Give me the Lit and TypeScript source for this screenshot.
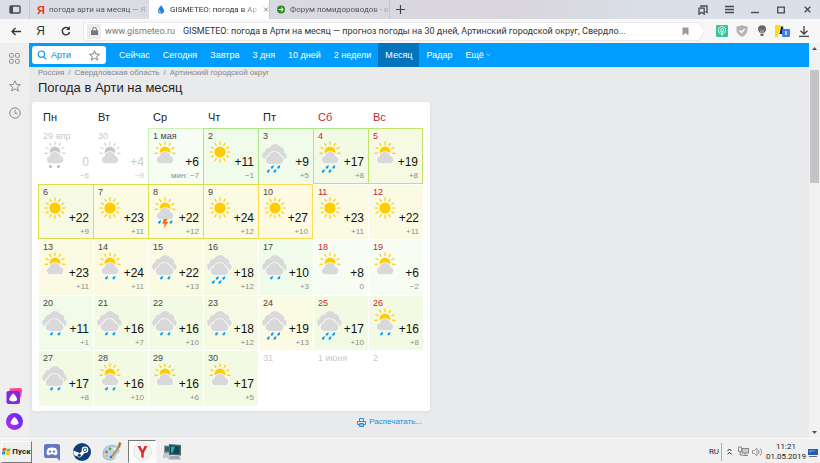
import { LitElement, html, svg, css, nothing } from "lit";
import { customElement, property } from "lit/decorators.js";
import { classMap } from "lit/directives/class-map.js";

type Sky = "sun" | "part" | "cloud";
type Fall = "" | "drizzle" | "rain" | "storm" | "snow";

interface Day {
  label: string;
  tone: string;
  sky?: Sky;
  fall?: Fall;
  max?: string;
  min?: string;
  edge?: string;
}

const d = (
  label: string, tone: string, sky?: Sky, fall: Fall = "",
  max = "", min = "", edge = "",
): Day => ({ label, tone, sky, fall, max, min, edge });

const WEEKS: Day[][] = [
  [
    d("29 апр", "past", "part", "snow", "0", "−6"),
    d("30", "past", "part", "", "+4", "−9"),
    d("1 мая", "t1", "part", "", "+6", "мин: −7", "pale"),
    d("2", "t2", "sun", "", "+11", "−1", "green"),
    d("3", "t2", "cloud", "rain", "+9", "+5", "green"),
    d("4", "t3", "part", "rain", "+17", "+8", "green foot"),
    d("5", "t4", "part", "", "+19", "+8", "lime foot end"),
  ],
  [
    d("6", "t4", "sun", "", "+22", "+9", "olive foot"),
    d("7", "t5", "sun", "", "+23", "+11", "olive foot"),
    d("8", "t5", "part", "storm", "+22", "+12", "olive foot"),
    d("9", "t5", "sun", "", "+24", "+12", "olive foot"),
    d("10", "t6", "sun", "", "+27", "+10", "gold foot end"),
    d("11", "t5", "sun", "", "+23", "+11"),
    d("12", "t5", "sun", "", "+22", "+11"),
  ],
  [
    d("13", "t5", "part", "", "+23", "+11"),
    d("14", "t5", "part", "drizzle", "+24", "+11"),
    d("15", "t5", "cloud", "drizzle", "+22", "+13"),
    d("16", "t4", "cloud", "rain", "+18", "+12"),
    d("17", "t2", "cloud", "drizzle", "+10", "+3"),
    d("18", "t1", "part", "", "+8", "0"),
    d("19", "t1", "part", "", "+6", "−2"),
  ],
  [
    d("20", "t2", "cloud", "drizzle", "+11", "+1"),
    d("21", "t3", "cloud", "drizzle", "+16", "+7"),
    d("22", "t3", "cloud", "drizzle", "+16", "+10"),
    d("23", "t4", "cloud", "drizzle", "+18", "+12"),
    d("24", "t5", "cloud", "rain", "+19", "+13"),
    d("25", "t3", "cloud", "rain", "+17", "+10"),
    d("26", "t3", "part", "drizzle", "+16", "+8"),
  ],
  [
    d("27", "t3", "cloud", "drizzle", "+17", "+8"),
    d("28", "t3", "part", "drizzle", "+16", "+10"),
    d("29", "t3", "part", "", "+16", "+6"),
    d("30", "t3", "part", "", "+17", "+5"),
    d("31", "past"),
    d("1 июня", "past"),
    d("2", "past"),
  ],
];

const DAY_NAMES = ["Пн", "Вт", "Ср", "Чт", "Пт", "Сб", "Вс"];
const NAV = ["Сейчас", "Сегодня", "Завтра", "3 дня", "10 дней", "2 недели", "Месяц", "Радар"];

@customElement("weather-icon")
export class WeatherIcon extends LitElement {
  @property() sky: Sky = "sun";
  @property() fall: Fall = "";
  @property({ type: Boolean }) muted = false;

  static styles = css`
    :host { display: block; }
    svg { display: block; width: 28px; height: 33px; }
    .sun { fill: #ffcc00; }
    .rays { stroke: #ffcc00; stroke-width: 1.2; stroke-linecap: round; }
    .cloud { fill: #d9d9dc; }
    .rim { stroke: #fbfcf0; stroke-width: 1.8; paint-order: stroke; }
    .drop { fill: #0a9bf5; }
    .flake { fill: #a9a9ad; }
    .bolt { fill: #ff6d00; }
    .muted .sun { fill: #c6c6c8; }
    .muted .rays { stroke: #d2d2d4; }
    .muted .cloud { fill: #dadadc; }
    .muted .rim { stroke: #fff; }
  `;

  private rays(angles: number[]) {
    return angles.map((a) => {
      const t = (a * Math.PI) / 180;
      const x = Math.sin(t);
      const y = -Math.cos(t);
      return svg`<line class="rays" x1=${14 + x * 7.6} y1=${11 + y * 7.6} x2=${14 + x * 10.1} y2=${11 + y * 10.1}></line>`;
    });
  }

  private drop(x: number, y: number) {
    return svg`<path class="drop" transform="translate(${x} ${y})" d="M1.9 -1.9 C2 0 1.7 1.7 .2 1.7 C-1.4 1.7 -1.2 0 -.2 -.7Z"></path>`;
  }

  private body() {
    if (this.sky === "sun") {
      return svg`<circle class="sun" cx="14" cy="11" r="5.6"></circle>
        ${this.rays([0, 30, 60, 90, 120, 150, 180, 210, 240, 270, 300, 330])}`;
    }
    if (this.sky === "part") {
      return svg`<circle class="sun" cx="14" cy="11" r="5.4"></circle>
        ${this.rays([-98, -64, -32, 0, 32, 64, 98])}
        <path class="cloud rim" d="M9 22.2 a3.4 3.4 0 0 1 -.5 -6.7 a5.6 5.6 0 0 1 10.8 -.6 a3.8 3.8 0 0 1 .3 7.3z"></path>`;
    }
    return svg`<path class="cloud" d="M4.2 18.5 a4 4 0 0 1 -.6 -7.6 a4.5 4.5 0 0 1 5 -4.1 a6 6 0 0 1 10.6 -.9 a4.7 4.7 0 0 1 4 5.500 a3.6 3.6 0 0 1 .2 6.8z"></path>
      <path class="cloud rim" d="M8.2 23 a4 4 0 0 1 -.6 -7.8 a6.200 6.200 0 0 1 11.6 -.3 a4.2 4.2 0 0 1 .2 8.1z"></path>`;
  }

  private precipitation() {
    switch (this.fall) {
      case "drizzle":
        return [this.drop(10, 25.7), this.drop(17.4, 25.7)];
      case "rain":
        return [this.drop(10.7, 26), this.drop(17.2, 26), this.drop(6.8, 30), this.drop(13.4, 30)];
      case "storm":
        return svg`${this.drop(8, 25)}${this.drop(19.5, 25)}
          <path class="bolt" d="M12.7 22h3.8l-1.5 3h2.3l-4.8 6.5 1.2-4.7h-2.3z"></path>`;
      case "snow":
        return svg`<circle class="flake" cx="9.5" cy="25.6" r="1.3"></circle><circle class="flake" cx="17.5" cy="25.6" r="1.3"></circle>`;
      default:
        return nothing;
    }
  }

  render() {
    return html`<svg viewBox="0 0 28 33" class=${classMap({ muted: this.muted })} aria-hidden="true">
      ${this.body()}${this.precipitation()}
    </svg>`;
  }
}

@customElement("month-calendar")
export class MonthCalendar extends LitElement {
  static styles = css`
    :host {
      display: block;
      background: #fff;
      border-radius: 3px;
      padding: 4px 7px 5px 6px;
      box-shadow: 0 1px 4px #0000000d;
    }
    table { width: 100%; table-layout: fixed; border-collapse: separate; border-spacing: 0; }
    th { height: 22px; padding: 0 0 0 5px; text-align: left; font-size: 11px; font-weight: 400; line-height: 22px; color: #222; }
    th:nth-child(n + 6), td:nth-child(n + 6) .date { color: #c2272d; }
    td { height: 55px; padding: 0; }
    tr:nth-child(odd) td, tr.first td { height: 56px; }
    td { box-sizing: border-box; vertical-align: top; border: 0 solid #fff; border-width: 1px 0 0 1px; }
    .day { display: grid; grid-template: 13px 32px / 1fr auto; padding: 1px 4px 0; }
    .date { grid-column: 1 / 3; font-size: 9px; line-height: 13px; color: #444; white-space: nowrap; }
    weather-icon { margin: -2px 0 0 -2px; width: 28px; }
    .temps { justify-self: end; width: 0; display: flex; flex-direction: column; align-items: flex-end; padding-top: 12px; white-space: nowrap; }
    .max { font-size: 12px; line-height: 15px; color: #111; }
    .min { font-size: 8px; line-height: 12px; color: #8d8d8d; }
    td.past .date, td.past .max, td.past .min { color: #c9c9c9; }
    .t1 { background: #f7fdf3; }
    .t2 { background: #f1fbea; }
    .t3 { background: #f2fae4; }
    .t4 { background: #f6fae3; }
    .t5 { background: #fbfae3; }
    .t6 { background: #fffae2; }
    .pale { border-color: #cdf2b8; }
    .green { border-color: #abe68b; }
    .lime { border-color: #bfe467; }
    .olive { border-color: #d9e04c; }
    .gold { border-color: #ffd952; }
    .foot { border-bottom-width: 1px; }
    .end { border-right-width: 1px; }
  `;

  private cell(day: Day) {
    const past = day.tone === "past";
    return html`<td class="${day.tone} ${day.edge}">
      <div class="day">
        <span class="date">${day.label}</span>
        ${day.sky
          ? html`<weather-icon .sky=${day.sky} .fall=${day.fall ?? ""} .muted=${past}></weather-icon>
              <span class="temps"><span class="max">${day.max}</span><span class="min">${day.min}</span></span>`
          : nothing}
      </div>
    </td>`;
  }

  render() {
    return html`<table>
      <thead><tr>${DAY_NAMES.map((n) => html`<th scope="col">${n}</th>`)}</tr></thead>
      <tbody>${WEEKS.map((w, i) => html`<tr class=${i === 0 ? "first" : ""}>${w.map((day) => this.cell(day))}</tr>`)}</tbody>
    </table>`;
  }
}

@customElement("app-root")
export class AppRoot extends LitElement {
  static styles = css`
    :host {
      display: flex;
      flex-direction: column;
      min-height: 100vh;
      font-family: "Liberation Sans", Arial, sans-serif;
      font-size: 9px;
      color: #222;
      background: #e9eaec;
    }
    * { box-sizing: border-box; }
    button { font: inherit; color: inherit; border: 0; padding: 0; background: none; display: flex; align-items: center; justify-content: center; flex: none; }
    a { color: inherit; text-decoration: none; }
    svg { display: block; flex: none; }

    .tabs { display: flex; height: 19px; background: linear-gradient(90deg, #dcdee6, #dadce4 20%, #d9d5dc 62%, #dadfe8 80%); font-family: Roboto, "Noto Sans", sans-serif; font-size: 8px; }
    .panel { width: 29px; }
    .tab { display: flex; align-items: center; width: 120px; padding: 0 4px 0 7px; gap: 5px; border-left: 1px solid #c6c8cf; color: #555; }
    .tab.active { background: #fff; border-color: #fff; color: #333; }
    .tab svg { width: 8px; height: 9px; }
    .tab .mark { width: 7px; color: #e5362c; font-family: "Liberation Sans", sans-serif; font-size: 11px; font-weight: 700; line-height: 12px; }
    .tab .name { flex: 1; white-space: nowrap; line-height: 12px; mask-image: linear-gradient(90deg, #000 82%, #0004); }
    .plus { width: 22px; border-left: 1px solid #c6c8cf; }
    .window { display: flex; margin-left: auto; }
    .window button { width: 26px; }

    .toolbar { display: flex; align-items: center; height: 24px; padding-right: 4px; background: #f7f7f8; }
    .toolbar > button { width: 24px; height: 24px; }
    .toolbar .back { width: 32px; }
    .toolbar .ya { width: 17px; font-size: 12px; color: #333; }
    .toolbar .reload { width: 33px; }
    .toolbar > button.ext { width: 20px; }
    .address { display: flex; align-items: center; flex: 1; min-width: 0; height: 19px; margin-left: 1px; padding-left: 3px; background: #fff; border: 1px solid #e9e9eb; border-right: 0; border-radius: 3px 0 0 3px; font-family: Roboto, "Noto Sans", sans-serif; font-size: 9px; }
    .lock { width: 14px; height: 15px; background: #ececec; border-radius: 2px; }
    .host { margin: 0 8px 0 4px; color: #777; }
    .title { flex: 1; overflow: hidden; white-space: nowrap; color: #333; }
    .tip { width: 7px; height: 19px; margin-right: 7px; }

    .frame { display: flex; flex: 1; }
    .side { display: flex; flex-direction: column; align-items: center; width: 29px; padding: 8px 0; gap: 12px; background: #eeeeef; }
    .side button { height: 15px; }
    .side .push { margin-top: auto; height: 18px; }
    .side .alice { height: 17px; margin-top: -4px; }

    .site { flex: 1; min-width: 0; }
    .nav { display: flex; align-items: stretch; gap: 1px; height: 24px; padding-left: 3px; background: #009dff; color: #fff; }
    .search { display: flex; align-items: center; width: 74px; margin: 3px 6px 3px 0; padding: 0 6px 0 5px; gap: 4px; background: #fff; border-radius: 3px; }
    .search input { flex: 1; min-width: 0; border: 0; padding: 0; outline: 0; background: none; color: #0a86dc; font: inherit; font-size: 9px; }
    .nav a { padding: 0 6px; line-height: 24px; white-space: nowrap; }
    .nav a.on { background: #0274bd; padding: 0 7px; }
    .nav a.more { display: flex; align-items: center; gap: 2px; }
    .content { max-width: 407px; padding: 0 6px 10px 3px; }
    .crumbs { display: flex; gap: 4px; padding-left: 6px; font-size: 8px; line-height: 12px; color: #85868a; }
    h1 { margin: 0; padding: 0 0 5px 6px; font-size: 13px; font-weight: 400; line-height: 18px; color: #222; }
    .print { display: flex; justify-content: flex-end; align-items: center; gap: 3px; padding: 5px 8px 0 0; font-size: 8px; line-height: 12px; color: #1b8fd6; }

    .scroll { display: flex; flex-direction: column; align-items: center; justify-content: space-between; width: 11px; padding: 4px 0; background: #f1f1f2; }
    .thumb { width: 9px; height: 113px; margin: 20px 0 auto; background: #c4c4c6; }

    .taskbar { display: flex; align-items: center; height: 26px; padding: 0 2px 0 1px; background: #f0f0f0; border-top: 1px solid #f8f8f8; }
    .start { width: 31px; height: 22px; gap: 1px; border: 1px solid #fff; border-right-color: #777; border-bottom-color: #777; font-family: Roboto, sans-serif; font-size: 8px; font-weight: 700; margin-right: 5px; }
    .app { width: 30px; height: 23px; }
    .app.on { width: 28px; margin: 0 1px; background: #fafafa; border: 1px solid #fff; border-top-color: #777; border-left-color: #777; }
    .tray { display: flex; align-items: center; margin-left: auto; font-family: Roboto, sans-serif; font-size: 8px; }
    .lang { padding-right: 2px; border-right: 1px solid #aaa; line-height: 18px; }
    .tray button { width: 14px; height: 16px; }
    .clock { width: 44px; text-align: center; line-height: 10px; }
    .tray .desk { width: 10px; padding-top: 3px; }
  `;

  private star(size: number, color: string) {
    return html`<svg width=${size} height=${size} viewBox="0 0 12 12" fill="none" stroke=${color} stroke-linejoin="round"><path d="M6 .8 7.5 4.4 11.4 4.7 8.4 7.2 9.4 11 6 8.9 2.6 11 3.6 7.2 .6 4.7 4.5 4.4Z"/></svg>`;
  }

  private tabStrip() {
    return html`<div class="tabs">
      <button class="panel" aria-label="Панель вкладок"><svg width="12" height="9" viewBox="0 0 12 9"><rect x="1" y="1" width="10" height="7" rx="1" fill="none" stroke="#454b5b" stroke-width="1.4"/><path d="M1 1h3v7H1z" fill="#454b5b"/></svg></button>
      <div class="tab"><span class="mark">Я</span><span class="name">погода арти на месяц — Я</span></div>
      <div class="tab active">
        <svg viewBox="0 0 8 9"><path d="M4 0C5 2 7 3.5 7 5.7A3 3 0 0 1 1 5.7C1 3.5 3 2 4 0Z" fill="#1c84dc"/><path d="M2.2 5.2Q2 7 4 7.4" fill="none" stroke="#bfe3ff"/></svg>
        <span class="name">GISMETEO: погода в Ар</span>
        <button aria-label="Закрыть вкладку"><svg viewBox="0 0 8 9" stroke="#888"><path d="M2 2.5l4 4M6 2.5l-4 4"/></svg></button>
      </div>
      <div class="tab">
        <svg viewBox="0 0 9 9"><circle cx="4.5" cy="4.5" r="4.5" fill="#2d8a1c"/><path d="M1.7 4.5h5M4.7 2.4l2 2.1-2 2.1" fill="none" stroke="#fff" stroke-width="1.2"/></svg>
        <span class="name">Форум помидороводов - о</span>
      </div>
      <button class="plus" aria-label="Новая вкладка"><svg width="9" height="9" viewBox="0 0 9 9"><path d="M4.5 0v9M0 4.5h9" stroke="#444" stroke-width="1.2"/></svg></button>
      <div class="window">
        <button aria-label="Закладки"><svg width="10" height="10" viewBox="0 0 10 10" fill="none" stroke="#434959" stroke-width="1.3"><path d="M3 2.5V1h6v6.5L7.6 6.5"/><path d="M1 3.2h5.2v6L3.6 7.3 1 9.2Z"/></svg></button>
        <button aria-label="Меню"><svg width="9" height="9" viewBox="0 0 9 9" stroke="#434959" stroke-width="1.4"><path d="M0 1.5h9M0 4.5h9M0 7.5h9"/></svg></button>
        <button aria-label="Свернуть"><svg width="8" height="9" viewBox="0 0 8 9" stroke="#434959" stroke-width="1.4"><path d="M0 7.5h8"/></svg></button>
        <button aria-label="Развернуть"><svg width="8" height="8" viewBox="0 0 8 8" fill="none" stroke="#434959" stroke-width="1.3"><path d="M.7 1.2h6.6v5.6H.7z"/></svg></button>
        <button aria-label="Закрыть"><svg width="7" height="7" viewBox="0 0 7 7" stroke="#434959" stroke-width="1.3"><path d="M.7.7l5.6 5.6M6.3.7.7 6.3"/></svg></button>
      </div>
    </div>`;
  }

  private toolbar() {
    return html`<div class="toolbar">
      <button class="back" aria-label="Назад"><svg width="10" height="9" viewBox="0 0 10 9" fill="none" stroke="#333" stroke-width="1.3"><path d="M10 4.5H1M4.5 1 1 4.5 4.5 8"/></svg></button>
      <button class="ya">Я</button>
      <button class="reload" aria-label="Обновить"><svg width="10" height="10" viewBox="0 0 10 10" fill="none" stroke="#333" stroke-width="1.4"><path d="M8.6 6A3.7 3.7 0 1 1 7.4 2.3"/><path d="M8.8 0v4H5z" fill="#333" stroke="none"/></svg></button>
      <div class="address">
        <button class="lock" aria-label="Защищено"><svg width="7" height="8" viewBox="0 0 7 8"><path d="M0 3.4h7V8H0z" fill="#777"/><path d="M1.5 4V2.4a2 2 0 0 1 4 0V4" fill="none" stroke="#777"/></svg></button>
        <span class="host">www.gismeteo.ru</span>
        <span class="title">GISMETEO: погода в Арти на месяц — прогноз погоды на 30 дней, Артинский городской округ, Свердло...</span>
        <button aria-label="В закладки"><svg width="18" height="9" viewBox="0 0 18 9"><path d="M2.5.5h6v8l-3-2.400-3 2.400z" fill="#999"/></svg></button>
      </div>
      <svg class="tip" viewBox="0 0 7 19" preserveAspectRatio="none"><path d="M0 .5H1L6.5 9.5 1 18.5H0" fill="#fff" stroke="#e6e6e8"/></svg>
      <button class="ext" aria-label="Расширение"><svg width="12" height="12" viewBox="0 0 12 12" fill="none" stroke="#e8fff6"><rect width="12" height="12" rx="1" fill="#3fc0a0" stroke="none"/><circle cx="6" cy="5.2" r="3.7" stroke-width=".8"/><circle cx="6" cy="5.2" r="1.7" stroke-width=".8"/><path d="M6 5.5V11"/></svg></button>
      <button class="ext" aria-label="Защита"><svg width="12" height="12" viewBox="0 0 12 12"><path d="M.5 1.2Q4 1.4 6 0q2 1.4 5.5 1.2V5Q11.5 9 6 12 .5 9 .5 5Z" fill="#b3b3b6"/><path d="M3.6 5.5l2 2 3-3.500" fill="none" stroke="#fff" stroke-width="1.3"/></svg></button>
      <button class="ext" aria-label="Лампа"><svg width="10" height="12" viewBox="0 0 10 12"><path d="M1 4.3a4 4 0 0 1 8 0Q9 6.5 7 8H3Q1 6.5 1 4.3Z" fill="#66666a"/><path d="M3.500 8.500h3V11h-3z" fill="#66666a"/><path d="M4 8V5.500L3.200 4.500M6 8V5.500l.8-1" fill="none" stroke="#ddd" stroke-width=".8"/></svg></button>
      <button class="ext" aria-label="Сервисы"><svg width="15" height="12" viewBox="0 0 15 12"><path d="M0 0h9v12H0z" fill="#ffd91a"/><path d="M6 0h3v12H2.500z" fill="#f3f3f3"/><path d="M4.500 9 6 1.500h2.200V9z" fill="#222"/><rect x="7" y="4" width="8" height="8" rx="1" fill="#3b7ff0"/><path d="M11 6v4" stroke="#fff" stroke-width="1.300"/></svg></button>
      <button aria-label="Загрузки"><svg width="10" height="11" viewBox="0 0 10 11" fill="none" stroke="#444" stroke-width="1.300"><path d="M5 0v8M1.500 4.700 5 8l3.500-3.300M0 10.300h10"/></svg></button>
    </div>`;
  }

  private sidebar() {
    return html`<aside class="side">
      <button aria-label="Табло"><svg width="11" height="11" viewBox="0 0 11 11" fill="none" stroke="#8b8b8d"><rect x=".5" y=".5" width="3.800" height="3.800" rx="1"/><rect x="6.500" y=".5" width="3.800" height="3.800" rx="1"/><rect x=".5" y="6.500" width="3.800" height="3.800" rx="1"/><rect x="6.500" y="6.500" width="3.800" height="3.800" rx="1"/></svg></button>
      <button aria-label="Избранное">${this.star(12, "#8b8b8d")}</button>
      <button aria-label="История"><svg width="12" height="12" viewBox="0 0 12 12" fill="none" stroke="#8b8b8d"><circle cx="6" cy="6" r="5.200"/><path d="M6 2.800V6.300h2.500"/></svg></button>
      <button class="push" aria-label="Коллекции"><svg width="17" height="18" viewBox="0 0 17 18"><path d="M3.500 1.500 14 1q2 0 2 2l-1 8-3-6H4z" fill="#ff3f9a"/><rect x=".5" y="4" width="13.500" height="13" rx="2" fill="#7f27e8"/><path d="M7.200 6.500c1 0 4 4.500 4 6 0 2.500-8 2.500-8 0 0-1.500 3-6 4-6Z" fill="#fff"/></svg></button>
      <button class="alice" aria-label="Алиса"><svg width="17" height="17" viewBox="0 0 17 17"><defs><linearGradient id="al" x1="0" y1="1" x2="1" y2="0"><stop stop-color="#b62bf0"/><stop offset="1" stop-color="#5b2af5"/></linearGradient></defs><circle cx="8.500" cy="8.500" r="8.500" fill="url(#al)"/><path d="M8.500 4c1 0 4 4.500 4 6 0 2.500-8 2.500-8 0 0-1.500 3-6 4-6Z" fill="#fff"/></svg></button>
    </aside>`;
  }

  private site() {
    return html`<main class="site">
      <nav class="nav">
        <label class="search">
          <svg width="10" height="10" viewBox="0 0 9 10" fill="none" stroke="#1592e6" stroke-width="1.200"><circle cx="3.900" cy="4.200" r="3.200"/><path d="M6.200 6.600 8.700 9.300"/></svg>
          <input value="Арти" aria-label="Поиск города">
          ${this.star(11, "#777")}
        </label>
        ${NAV.map((n) => html`<a href="#" class=${classMap({ on: n === "Месяц" })}>${n}</a>`)}
        <a href="#" class="more">Ещё<svg width="5" height="4" viewBox="0 0 5 4" fill="none" stroke="#9ad6ff"><path d="M.5.7l2 2 2-2"/></svg></a>
      </nav>
      <div class="content">
        <div class="crumbs"><a href="#">Россия</a><span>/</span><a href="#">Свердловская область</a><span>/</span><a href="#">Артинский городской округ</a></div>
        <h1>Погода в Арти на месяц</h1>
        <month-calendar></month-calendar>
        <div class="print"><svg width="9" height="9" viewBox="0 0 9 9" fill="none" stroke="#2b90cf"><path d="M2.500 3V.5h4V3M2 6.500H.5v-3h8v3H7M2.500 5.500h4v3h-4zM3 7h3"/></svg><a href="#">Распечатать...</a></div>
      </div>
    </main>`;
  }

  private taskbar() {
    return html`<footer class="taskbar">
      <button class="start"><svg width="9" height="9" viewBox="0 0 9 9"><path d="M.8 1.300Q2.500.3 4.200 1.200L3.600 4Q2 3.300.2 4.200Z" fill="#f0562a"/><path d="M4.800 1.500Q6.500 2.300 8.800 1.300L8 4.300Q6 5 4.200 4.200Z" fill="#7bbf2e"/><path d="M.1 4.800Q2 4 3.500 4.700L2.900 7.500Q1.300 6.900-.3 7.800Z" fill="#2d8be0"/><path d="M4.100 5Q6 5.700 7.900 4.900L7.200 7.900Q5.300 8.600 3.500 7.800Z" fill="#fcc21b"/></svg>Пуск</button>
      <button class="app" aria-label="Discord"><svg width="16" height="18" viewBox="0 0 16 18"><path d="M2 1h12q2 0 2 2v15l-3-3H2q-2 0-2-2V3q0-2 2-2Z" fill="#6577c4"/><path d="M4 5.200Q8 3.700 12 5.200 13.800 8 13.500 11 12 12.300 10.500 12.200L9.800 11.200H6.200L5.500 12.200Q4 12.300 2.500 11 2.200 8 4 5.200Z" fill="#fff"/><circle cx="6" cy="8.600" r="1.200" fill="#6577c4"/><circle cx="10" cy="8.600" r="1.200" fill="#6577c4"/></svg></button>
      <button class="app" aria-label="Steam"><svg width="18" height="18" viewBox="0 0 18 18"><circle cx="9" cy="9" r="9" fill="#123f73"/><path d="M.3 7.500 7 10.300 9.500 7l2-3L15 7.500 11 10.500 8.300 13.500Q6.500 15.500 4.500 13.600L.8 12Z" fill="#fff"/><circle cx="12" cy="6.800" r="3.300" fill="#fff"/><circle cx="12" cy="6.800" r="2.100" fill="#123f73"/><circle cx="12" cy="6.800" r="1.300" fill="#fff"/><circle cx="6.300" cy="12.300" r="1.500" fill="#123f73"/></svg></button>
      <button class="app" aria-label="Paint"><svg width="20" height="19" viewBox="0 0 20 19"><path d="M1 12Q1 5 8 3.500q6-1 8.500 3 2 3.500-1.500 5-2 1-2 2.500 0 4-5 4-7 0-7-6Z" fill="#b7d7ea" stroke="#7ba6c4" stroke-width=".7"/><circle cx="4.500" cy="10" r="1.400" fill="#e2573b"/><circle cx="8" cy="6.800" r="1.400" fill="#5aa646"/><circle cx="4.700" cy="14" r="1.300" fill="#e9b52a"/><circle cx="9" cy="15" r="1.300" fill="#4a71c0"/><circle cx="12.500" cy="7" r="1.200" fill="#fff"/><path d="M9 14 16 4.500l1.600 1L10.500 15Z" fill="#c9863f"/><path d="M15.500 4.500 17 0l2.500 1-1.700 5Z" fill="#b8763b"/></svg></button>
      <button class="app on" aria-label="Яндекс Браузер"><svg width="19" height="19" viewBox="0 0 19 19"><circle cx="9.500" cy="9.500" r="9" fill="#f3f3f4" stroke="#dedee0" stroke-width=".7"/><path d="M4.500 4h2.800l2.200 4.300L11.700 4h2.800l-3.800 6.700V15.500H8.300V10.700Z" fill="#dd1f26"/></svg></button>
      <button class="app" aria-label="Компьютер"><svg width="20" height="18" viewBox="0 0 20 18"><path d="M2 2.500h9v8H2z" fill="#8c969c"/><path d="M3 3.500h6v5H3z" fill="#35606a"/><path d="M1 11h8v4H1z" fill="#c4c9cc"/><path d="M7 1 19 2v10.500L7 12Z" fill="#59666d"/><path d="M8 2.300 17.500 3v8L8 10.500Z" fill="#0d4654"/><path d="M9 3.500h4l-2 6H9z" fill="#20b2a5"/><path d="M9 13h8l2 3.500H6Z" fill="#a3abb0"/></svg></button>
      <div class="tray">
        <span class="lang">RU</span>
        <button aria-label="Скрытые значки"><svg width="5" height="7" viewBox="0 0 5 7" fill="none" stroke="#222"><path d="M.5 3l2-2 2 2M.5 6.300l2-2 2 2"/></svg></button>
        <button aria-label="Сеть"><svg width="11" height="11" viewBox="0 0 11 11" fill="none" stroke="#888"><path d="M.5 1v4.500h3V1zM2 5.500V9h3"/><rect x="4" y="2.500" width="6.500" height="4.500" fill="#ccc"/><path d="M5 9.500h5M7.300 7v2.500"/></svg></button>
        <button aria-label="Громкость"><svg width="11" height="10" viewBox="0 0 11 10" fill="none" stroke="#999"><path d="M.5 3.500h2L5 1v8L2.500 6.500h-2z"/><path d="M6.500 3q1.300 2 0 4M8.500 1.500q2.500 3.500 0 7"/></svg></button>
        <time class="clock">11:21<br>01.05.2019</time>
        <button class="desk" aria-label="Рабочий стол"><svg width="10" height="8" viewBox="0 0 10 8"><path d="M0 0h10v6H0z" fill="#2458ad"/><path d="M1 1h8L1 4z" fill="#4d8ede"/><path d="M1 7h8v1H1z" fill="#667"/></svg></button>
      </div>
    </footer>`;
  }

  render() {
    return html`
      ${this.tabStrip()}
      ${this.toolbar()}
      <div class="frame">
        ${this.sidebar()}
        ${this.site()}
        <div class="scroll">
          <svg width="5" height="3" viewBox="0 0 5 3"><path d="M0 3 2.500 0 5 3z" fill="#555"/></svg>
          <div class="thumb"></div>
          <svg width="5" height="3" viewBox="0 0 5 3"><path d="M0 0 2.500 3 5 0z" fill="#555"/></svg>
        </div>
      </div>
      ${this.taskbar()}
    `;
  }
}
